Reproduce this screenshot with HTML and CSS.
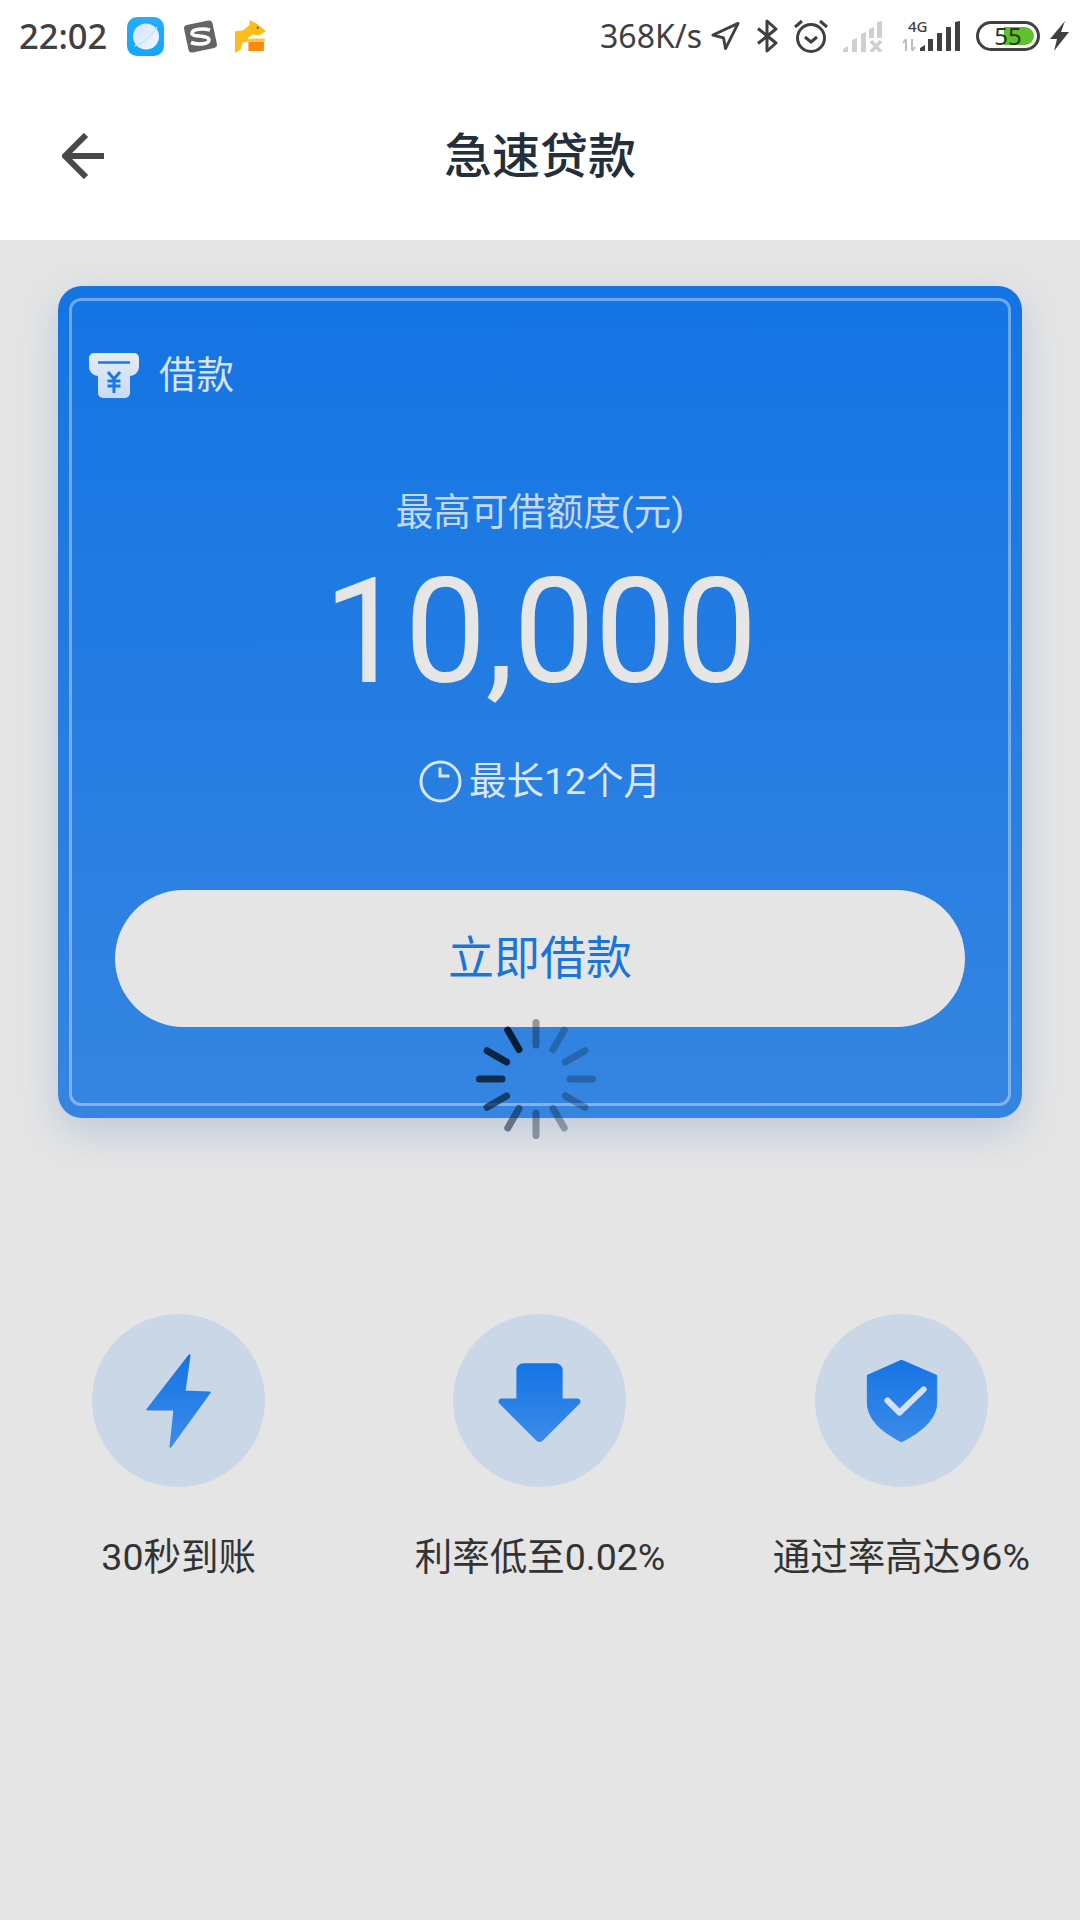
FILE: index.html
```html
<!DOCTYPE html>
<html lang="zh-CN">
<head>
<meta charset="utf-8">
<title>急速贷款</title>
<link rel="stylesheet" href="styles.css">
</head>
<body>
<div class="page">
  <header class="top">
    <div class="status">
      <span class="time">22:02</span>
      <svg class="app app-browser" viewBox="0 0 37 39"><defs><linearGradient id="br" x1="0" y1="0" x2="0" y2="1"><stop offset="0" stop-color="#24aefb"/><stop offset="1" stop-color="#16a5f8"/></linearGradient><linearGradient id="pl" x1="0" y1="0" x2="1" y2="1"><stop offset="0" stop-color="#cfe3f9"/><stop offset="1" stop-color="#f4f9ff"/></linearGradient></defs><rect width="37" height="39" rx="10" fill="url(#br)"/><circle cx="19" cy="19.500" r="13" fill="url(#pl)"/><path d="M7 29 C14 28 26 18 30 10" fill="none" stroke="#bfe3fb" stroke-width="1.200"/></svg>
      <svg class="app app-sogou" viewBox="0 0 35 35"><rect x="3" y="3.500" width="29" height="28" rx="3.500" transform="rotate(-12 17.500 17.500)" fill="#646464"/><path d="M27 11 C20 9 9 10 9 14.500 C9 18 26 16 26 21 C26 25.500 14 26 8 23.500" fill="none" stroke="#fff" stroke-width="3.600"/></svg>
      <svg class="app app-roo" viewBox="0 0 31 32"><path d="M0 11 L8 10 L14 5 L14 0 L22 4 L30 11 L23 15 L17 14 L12 18 L16 20 L7 22 L6 28 L0 32Z" fill="#fbbd1c"/><rect x="13" y="21" width="15" height="9" fill="#f98a10"/><rect x="14" y="18" width="15" height="3" fill="#fbc33a"/><circle cx="22" cy="7.500" r="0.900" fill="#333"/></svg>
      <span class="spring"></span>
      <span class="speed">368K/s</span>
      <svg class="si si-nav" viewBox="0 0 30 30"><path d="M28 2 L2 14 L13 17 L15 28Z" fill="none" stroke="#404040" stroke-width="3" stroke-linejoin="round"/></svg>
      <svg class="si si-bt" viewBox="0 0 22 34"><path d="M2 9.500 L20 24 L11 32 V2 L20 10 L2 24.500" fill="none" stroke="#404040" stroke-width="3" stroke-linejoin="round"/></svg>
      <svg class="si si-alarm" viewBox="0 0 34 34"><circle cx="17" cy="19" r="13.500" fill="none" stroke="#404040" stroke-width="3"/><path d="M11 18 L17 23 L23 18" fill="none" stroke="#404040" stroke-width="3"/><path d="M1 8 L8 2 M26 2 L33 8" stroke="#404040" stroke-width="3"/></svg>
      <svg class="si si-sig" viewBox="0 0 41 31"><path d="M1 31 V28 L6 25 V31Z M10 31 V19 L15 17 V31Z M19 31 V13 L24 11 V31Z M27 17 V8 L32 6 V17Z M35 17 V1 L40 0 V17Z" fill="#cfcfcf"/><path d="M29 20 L39 31 M39 20 L29 31" stroke="#cfcfcf" stroke-width="3.500"/></svg>
      <span class="cell">
        <span class="cell-4g">4G</span>
        <svg class="cell-bars" viewBox="0 0 57 30"><path d="M3 30 V19 M0 22 L3 18 M9 18 V29 M12 26 L9 30" stroke="#bdbdbd" stroke-width="2" fill="none"/><path d="M17 30 V27 L22 24 V30Z M25 30 V18 H30 V30Z M34 30 V12 H39 V30Z M43 30 V6 H48 V30Z M52 30 V1 L57 0 V30Z" fill="#404040"/></svg>
      </span>
      <span class="battery"><span class="battery-fill"></span><span class="battery-num">55</span></span>
      <svg class="si si-bolt" viewBox="0 0 19 30"><path d="M15 0 L0 18 H7 L4 30 L19 11 H11Z" fill="#404040"/></svg>
    </div>
    <nav class="nav">
      <svg class="back" viewBox="0 0 44 46"><path d="M42 23 H4 M24 2 L3 23 L24 44" fill="none" stroke="#484848" stroke-width="6"/></svg>
      <h1 class="title">急速贷款</h1>
    </nav>
  </header>

  <main>
    <section class="card">
      <div class="card-inner">
        <div class="tag">
          <svg class="tag-icon" viewBox="0 0 50 45"><defs><linearGradient id="tg" x1="0" y1="0" x2="0" y2="1"><stop offset="0" stop-color="#e6ecf5"/><stop offset="1" stop-color="#c9dbf2"/></linearGradient></defs><path d="M5 0 H45 A5 5 0 0 1 50 5 V14 A9 9 0 0 1 41 23 V40 A5 5 0 0 1 36 45 H14 A5 5 0 0 1 9 40 V23 A9 9 0 0 1 0 14 V5 A5 5 0 0 1 5 0Z" fill="url(#tg)"/><path d="M9 9.500 H41" stroke="#1a78e4" stroke-width="2.500"/><path d="M19 19 L25 26 L31 19 M25 26 V40 M18.500 28 H31.500 M18.500 33 H31.500" fill="none" stroke="#1a78e4" stroke-width="3"/></svg>
          <span class="tag-text">借款</span>
        </div>
        <p class="limit-label">最高可借额度(元)</p>
        <p class="amount">10,000</p>
        <div class="term">
          <svg class="term-icon" viewBox="0 0 43 43"><circle cx="21.500" cy="21.500" r="19.500" fill="none" stroke="#d8e6f7" stroke-width="3"/><path d="M21 7.500 V16 H30.500" fill="none" stroke="#d8e6f7" stroke-width="3"/></svg>
          <span>最长12个月</span>
        </div>
        <button class="cta">立即借款</button>
      </div>
    </section>

    <section class="features">
      <div class="feature">
        <svg class="feature-icon" viewBox="0 0 172 172"><defs><linearGradient id="f1" x1="0" y1="0" x2="0" y2="1"><stop offset="0" stop-color="#1474e4"/><stop offset="1" stop-color="#3d8be8"/></linearGradient></defs><circle cx="86" cy="86" r="86" fill="#c9d7e7"/><path d="M97 41 L92 77 L117 78 L78 132 L82 95 L55 95Z" fill="url(#f1)" stroke="url(#f1)" stroke-width="2" stroke-linejoin="round"/></svg>
        <span class="feature-label">30秒到账</span>
      </div>
      <div class="feature">
        <svg class="feature-icon" viewBox="0 0 172 172"><defs><linearGradient id="f2" x1="0" y1="0" x2="0" y2="1"><stop offset="0" stop-color="#1474e4"/><stop offset="1" stop-color="#3d8be8"/></linearGradient></defs><circle cx="86" cy="86" r="86" fill="#c9d7e7"/><path d="M70 49 H102 A7 7 0 0 1 109 56 V84 H124 A3 3 0 0 1 126 89 L89 126 A4 4 0 0 1 83 126 L46 89 A3 3 0 0 1 48 84 H63 V56 A7 7 0 0 1 70 49Z" fill="url(#f2)"/></svg>
        <span class="feature-label">利率低至0.02%</span>
      </div>
      <div class="feature">
        <svg class="feature-icon" viewBox="0 0 172 172"><defs><linearGradient id="f3" x1="0" y1="0" x2="0" y2="1"><stop offset="0" stop-color="#1474e4"/><stop offset="1" stop-color="#3d8be8"/></linearGradient></defs><circle cx="86" cy="86" r="86" fill="#c9d7e7"/><path d="M86 46 L121 61 V88 C121 106 102 119 86 127 C70 119 52 106 52 88 V61Z" fill="url(#f3)" stroke="url(#f3)" stroke-width="1" stroke-linejoin="round"/><path d="M72 86 L84 98 L108 75" fill="none" stroke="#d5e0f0" stroke-width="6" stroke-linecap="round" stroke-linejoin="round"/></svg>
        <span class="feature-label">通过率高达96%</span>
      </div>
    </section>
  </main>

  <svg class="spinner" viewBox="0 0 120 120">
    <g stroke="#0a1c33" stroke-width="7" stroke-linecap="round">
      <line x1="60" y1="3.500" x2="60" y2="26" opacity=".38" transform="rotate(0 60 60)"/>
      <line x1="60" y1="3.500" x2="60" y2="26" opacity=".28" transform="rotate(30 60 60)"/>
      <line x1="60" y1="3.500" x2="60" y2="26" opacity=".28" transform="rotate(60 60 60)"/>
      <line x1="60" y1="3.500" x2="60" y2="26" opacity=".3" transform="rotate(90 60 60)"/>
      <line x1="60" y1="3.500" x2="60" y2="26" opacity=".32" transform="rotate(120 60 60)"/>
      <line x1="60" y1="3.500" x2="60" y2="26" opacity=".35" transform="rotate(150 60 60)"/>
      <line x1="60" y1="3.500" x2="60" y2="26" opacity=".38" transform="rotate(180 60 60)"/>
      <line x1="60" y1="3.500" x2="60" y2="26" opacity=".52" transform="rotate(210 60 60)"/>
      <line x1="60" y1="3.500" x2="60" y2="26" opacity=".68" transform="rotate(240 60 60)"/>
      <line x1="60" y1="3.500" x2="60" y2="26" opacity=".85" transform="rotate(270 60 60)"/>
      <line x1="60" y1="3.500" x2="60" y2="26" opacity=".92" transform="rotate(300 60 60)"/>
      <line x1="60" y1="3.500" x2="60" y2="26" opacity="1" transform="rotate(330 60 60)"/>
    </g>
  </svg>
</div>
</body>
</html>
```

FILE: styles.css
```css
* { box-sizing: border-box; }
html, body { margin: 0; padding: 0; }
body {
  font-family: Roboto, "Noto Sans CJK SC", sans-serif;
  background: #e5e5e5;
}
.page {
  position: relative;
  width: 1080px;
  height: 1920px;
  overflow: hidden;
  background: #e5e5e5;
}
.top { background: #fff; height: 240px; }

/* status bar */
.status {
  display: flex;
  align-items: center;
  height: 72px;
  padding: 0 11px 0 19px;
  color: #404040;
}
.time { font-family: "Noto Sans", sans-serif; font-size: 34.500px; font-weight: 500; line-height: 1; }
.app { flex: none; }
.app-browser { width: 37px; height: 39px; margin-left: 20px; }
.app-sogou { width: 35px; height: 35px; margin-left: 19px; }
.app-roo { width: 32px; height: 33px; margin-left: 17px; }
.spring { flex: 1; }
.speed { font-family: "Noto Sans", sans-serif; font-size: 32px; line-height: 1; }
.si { flex: none; }
.si-nav { width: 29px; height: 30px; margin-left: 9px; }
.si-bt { width: 22px; height: 34px; margin-left: 16px; }
.si-alarm { width: 34px; height: 34px; margin-left: 16px; }
.si-sig { width: 41px; height: 31px; margin-left: 14px; }
.cell { position: relative; display: block; width: 57px; height: 30px; margin-left: 20px; }
.cell-bars { display: block; width: 57px; height: 30px; }
.cell-4g {
  position: absolute;
  left: 5px;
  top: -2px;
  font-family: "Noto Sans", sans-serif;
  font-size: 15px;
  font-weight: 500;
  line-height: 15px;
}
.battery {
  position: relative;
  display: flex;
  align-items: center;
  justify-content: center;
  width: 64px;
  height: 30px;
  margin-left: 16px;
  border: 3px solid #404040;
  border-radius: 15px;
}
.battery-fill {
  position: absolute;
  left: 25px;
  right: 3px;
  top: 3px;
  bottom: 3px;
  background: #5fc12d;
  border-radius: 0 10px 10px 0;
}
.battery-num { position: relative; font-family: "Noto Sans", sans-serif; font-size: 24px; line-height: 24px; color: #263a1c; }
.si-bolt { width: 19px; height: 30px; margin-left: 10px; }

/* nav */
.nav {
  position: relative;
  display: flex;
  align-items: center;
  justify-content: center;
  height: 168px;
  padding-top: 2px;
}
.back { position: absolute; left: 62px; top: 61px; width: 44px; height: 46px; }
.title {
  margin: 0;
  font-size: 48px;
  font-weight: 500;
  line-height: 1;
  color: #252f3c;
}

/* card */
.card {
  height: 832px;
  margin: 46px 58px 0;
  padding: 12px 11px;
  border-radius: 24px;
  background: linear-gradient(180deg, #1474e4 0%, #3585e0 100%);
  box-shadow: 0 14px 40px rgba(40, 100, 180, .22);
}
.card-inner {
  display: flex;
  flex-direction: column;
  align-items: center;
  height: 100%;
  border: 3px solid rgba(255, 255, 255, .38);
  border-radius: 12px;
  padding: 0 43px;
}
.tag {
  display: flex;
  align-self: flex-start;
  align-items: center;
  margin: 52px 0 0 -26px;
  color: #d5e3f5;
}
.tag-icon { width: 50px; height: 45px; flex: none; }
.tag-text { margin-left: 20px; font-size: 37.500px; line-height: 45px; }
.limit-label {
  margin: 92px 0 0;
  font-size: 37.500px;
  line-height: 44px;
  color: #c4d8f2;
}
.amount {
  margin: 26px 0 0;
  font-size: 146px;
  font-weight: 400;
  line-height: 146px;
  color: #e6e6e6;
  letter-spacing: -1px;
}
.term {
  display: flex;
  align-items: center;
  margin-top: 54px;
  font-size: 37.500px;
  line-height: 43px;
  color: #dbe7f6;
}
.term-icon { width: 43px; height: 43px; margin-right: 7px; flex: none; }
.cta {
  width: 850px;
  height: 137px;
  margin-top: 87px;
  padding: 0 0 9px;
  flex: none;
  border: 0;
  border-radius: 69px;
  background: #e5e5e5;
  color: #1976d8;
  font-family: Roboto, "Noto Sans CJK SC", sans-serif;
  font-size: 46px;
}

/* features */
.features {
  display: grid;
  grid-template-columns: repeat(3, 1fr);
  margin: 196px -2px 0;
}
.feature {
  display: flex;
  flex-direction: column;
  align-items: center;
}
.feature-icon { width: 173px; height: 173px; display: block; }
.feature-label {
  margin-top: 48px;
  font-size: 37.500px;
  line-height: 44px;
  white-space: nowrap;
  color: #333;
}

.spinner {
  position: absolute;
  left: 476px;
  top: 1019px;
  width: 120px;
  height: 120px;
}
```
